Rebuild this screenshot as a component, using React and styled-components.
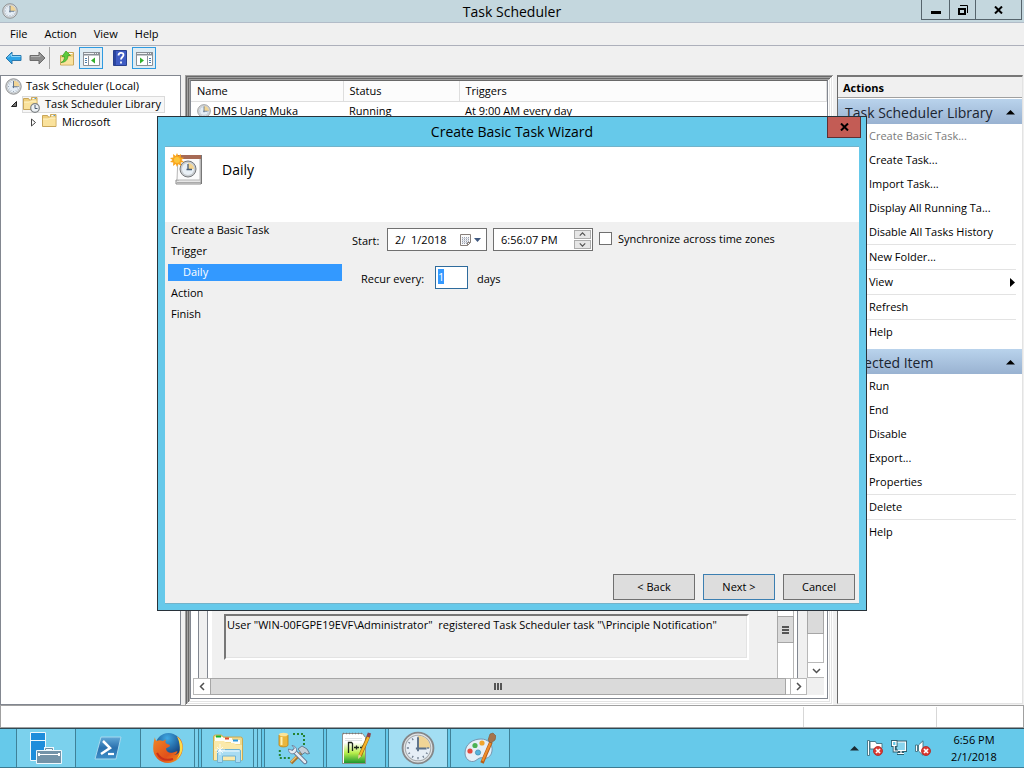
import { useEffect, useRef, useState } from "react";
import styled, { createGlobalStyle } from "styled-components";

const GlobalStyle = createGlobalStyle`
  * {
    box-sizing: border-box;
  }

  body {
    margin: 0;
    font-family: "Open Sans", "Noto Sans", sans-serif;
    font-size: 11px;
    line-height: 16px;
    color: #000;
    background: #f0f0f0;
  }

  button,
  input {
    font: inherit;
    color: inherit;
  }

  svg {
    display: block;
    flex: none;
  }
`;

// Window frame
const Desktop = styled.div`
  position: relative;
  min-height: 100vh;
  display: flex;
  flex-direction: column;
  background: #f0f0f0;
`;

const TitleBar = styled.header`
  display: grid;
  grid-template-columns: 1fr auto 1fr;
  height: 23px;
  background: #c4d7de;
  border-bottom: 1px solid #b2bcc8;
`;

const TitleIcon = styled.div`
  padding: 3px 2px;
`;

const Title = styled.h1`
  margin: 0;
  font-size: 14px;
  font-weight: 400;
  line-height: 24px;
`;

const WindowControls = styled.div`
  display: flex;
  justify-content: flex-end;
  align-items: flex-start;
  padding-right: 2px;
`;

const ControlButton = styled.button`
  display: flex;
  align-items: center;
  justify-content: center;
  width: ${(props) => props.$width}px;
  height: 20px;
  padding: 0;
  background: none;
  border: 1px solid #56646c;
  border-top: none;
  border-left-width: ${(props) => (props.$first ? "1px" : "0")};
`;

const MenuBar = styled.nav`
  display: flex;
  gap: 17px;
  height: 23px;
  padding: 0 10px;
  border-bottom: 1px solid #adb0bb;
`;

const MenuButton = styled.button`
  padding: 0;
  border: none;
  background: none;
  font-size: 11px;
  line-height: 22px;
`;

const Toolbar = styled.div`
  display: flex;
  align-items: flex-start;
  padding: 1px 1px 6px;
`;

const ToolButton = styled.button`
  display: flex;
  align-items: center;
  justify-content: center;
  width: 24px;
  height: 22px;
  padding: 0;
  background: ${(props) => (props.$pressed ? "#dfecf3" : "none")};
  border: 1px solid ${(props) => (props.$pressed ? "#2f9ae0" : "transparent")};
`;

const ToolDivider = styled.span`
  width: 1px;
  height: 22px;
  margin-right: 5px;
  background: #a6a6a6;
`;

const ToolGap = styled.span`
  width: 5px;
`;

const Workspace = styled.main`
  flex: 1;
  display: flex;
  gap: 4px;
  padding-right: 1px;
`;

// Tree
const TreePane = styled.aside`
  width: 181px;
  background: #fff;
  border: 1px solid #828790;
  padding-top: 1px;
`;

const TreeRow = styled.div`
  display: flex;
  align-items: center;
  gap: 4px;
  height: 18px;
  padding-left: ${(props) => props.$indent}px;
  white-space: nowrap;
`;

const TreeLabel = styled.span`
  display: flex;
  align-items: center;
  gap: 5px;
  height: 17px;
  padding: 0 3px 0 0;
  background: ${(props) => (props.$selected ? "#f7f7f7" : "none")};
  border: 1px solid ${(props) => (props.$selected ? "#dadada" : "transparent")};
`;

// Middle pane
const CenterFrame = styled.section`
  flex: 1;
  min-width: 0;
  display: flex;
  padding: 5px 5px 6px 5px;
  background: #fff;
  box-shadow:
    inset 1px 1px #a0a0a0,
    inset -1px -1px #fff,
    inset 2px 2px #696969,
    inset -2px -2px #e3e3e3,
    inset 3px 3px #a0a0a0,
    inset -3px -3px #fff,
    inset 4px 4px #696969,
    inset -4px -4px #e3e3e3,
    inset 5px 5px #a0a0a0;
`;

const CenterView = styled.div`
  flex: 1;
  min-width: 0;
  display: flex;
  flex-direction: column;
  background: #fff;
  border: 1px solid #828790;
  border-top-color: #696969;
`;

const TaskTable = styled.table`
  width: 100%;
  border-collapse: collapse;
  table-layout: fixed;

  th {
    height: 20px;
    padding: 1px 6px 0;
    font-weight: 400;
    text-align: left;
    background: #fcfcfc;
    border-right: 1px solid #dedede;
    border-bottom: 1px solid #dedede;
  }

  td {
    height: 18px;
    padding: 1px 6px 0;
  }
`;

const TaskName = styled.span`
  display: flex;
  align-items: center;
  gap: 2px;
`;

const Details = styled.div`
  flex: 1;
  display: grid;
  grid-template-columns: 1fr 17px;
  grid-template-rows: 1fr 17px;
  padding: 0 3px 3px 2px;
`;

const EventPane = styled.div`
  display: flex;
  padding-left: 5px;
`;

const EventEdge = styled.div`
  width: 10px;
  background: #f0f0f0;
  border-left: 1px solid #828790;
  border-right: ${(props) => (props.$open ? "none" : "1px solid #828790")};
`;

const EventBody = styled.div`
  flex: 1;
  display: flex;
  align-items: flex-end;
  margin-left: 4px;
  padding: 0 28px 18px 12px;
  background: #f0f0f0;
`;

const EventText = styled.p`
  flex: 1;
  height: 46px;
  margin: 0;
  padding: 1px 1px;
  white-space: pre;
  border: 2px solid;
  border-color: #777 #fff #fff #777;
  box-shadow: inset -1px -1px #e3e3e3;
`;

const VerticalScroll = styled.div`
  display: flex;
  flex-direction: column;
  justify-content: flex-end;
  width: 17px;
  margin-right: ${(props) => (props.$inset ? "3px" : "0")};
  background: #fff;
  border: 1px solid #b8b8b8;
  border-bottom: ${(props) => (props.$inset ? "none" : "1px solid #b8b8b8")};
`;

const VerticalThumb = styled.div`
  display: flex;
  align-items: center;
  justify-content: center;
  height: ${(props) => props.$size}px;
  margin: 0 -1px ${(props) => props.$below}px;
  background: #dadada;
  border: 1px solid #a6a6a6;
`;

const HorizontalScroll = styled.div`
  display: flex;
  background: #fff;
  border: 1px solid #b8b8b8;
`;

const HorizontalThumb = styled.div`
  flex: 1;
  display: flex;
  align-items: center;
  justify-content: center;
  margin: -1px 4px -1px 0;
  background: #dadada;
  border: 1px solid #a6a6a6;
`;

const ScrollButton = styled.button`
  display: flex;
  align-items: center;
  justify-content: center;
  width: 16px;
  height: 15px;
  padding: 0;
  background: #fff;
  border: none;
  border-left: ${(props) => (props.$line === "left" ? "1px solid #b8b8b8" : "none")};
  border-top: ${(props) => (props.$line === "top" ? "1px solid #b8b8b8" : "none")};
`;

const ScrollCorner = styled.div`
  background: #f0f0f0;
`;

// Actions pane
const ActionsPane = styled.aside`
  width: 186px;
  background: #fff;
  border: 1px solid #e3e3e3;
  border-top: 2px solid #777;
  border-left: 1px solid #696969;
  margin-bottom: 1px;
`;

const ActionsTitle = styled.h2`
  height: 21px;
  margin: 0 0 1px;
  padding: 0 5px;
  font-size: 11px;
  line-height: 21px;
  background: #f0f0f0;
  border-bottom: 1px solid #a0a0a0;
`;

const ActionGroup = styled.section`
  margin-bottom: 5px;
`;

const GroupHeader = styled.button`
  display: flex;
  align-items: center;
  justify-content: space-between;
  width: 100%;
  height: 25px;
  padding: 2px 7px 0;
  font-size: 14px;
  white-space: nowrap;
  color: #1a2430;
  background: linear-gradient(#b9d3ec, #99b2d1);
  border: none;
`;

const ActionItem = styled.button`
  display: flex;
  align-items: center;
  justify-content: space-between;
  width: 178px;
  height: ${(props) => (props.$divided ? "25px" : "24px")};
  padding: 0 0 0 31px;
  color: ${(props) => (props.$dimmed ? "#7a7a7a" : "#000")};
  background: none;
  border: none;
  border-bottom: ${(props) => (props.$divided ? "1px solid #e3e3e3" : "none")};
`;

const StatusBar = styled.footer`
  display: flex;
  justify-content: flex-end;
  height: 23px;
  padding: 1px 1px 0;
  background: #fff;
  border: 1px solid #a0a0a0;
`;

const StatusCell = styled.span`
  width: ${(props) => props.$width}px;
  border-left: 1px solid #d7d7d7;
`;

// Taskbar
const Taskbar = styled.div`
  display: flex;
  height: 40px;
  padding-left: 16px;
  background: #66c9ea;
  border-top: 1px solid #2f4a55;
  border-bottom: 1px solid #3c7b92;
`;

const TaskButton = styled.button`
  display: flex;
  align-items: center;
  justify-content: center;
  width: ${(props) => props.$width}px;
  padding: 0;
  background: ${(props) =>
    props.$active ? "#a3def3" : props.$running ? "#7bd1ed" : "none"};
  border: solid #3f8198;
  border-width: ${(props) => (props.$running ? "0 1px" : "0")};
  margin-right: ${(props) => props.$gap || 0}px;
`;

const StackEdge = styled.span`
  width: 4px;
  margin-right: ${(props) => (props.$last ? "2px" : "0")};
  background: #7bd1ed;
  border-right: 1px solid #3f8198;
`;

const Tray = styled.div`
  display: flex;
  align-items: center;
  gap: 8px;
  margin-left: auto;
  padding-right: 26px;
`;

const TrayClock = styled.time`
  width: 48px;
  margin-left: 11px;
  text-align: center;
  line-height: 17px;
  white-space: nowrap;
`;

// Wizard dialog
const DialogLayer = styled.div`
  position: absolute;
  inset: 0;
  display: flex;
  align-items: flex-start;
  justify-content: center;
  padding-top: 116px;
`;

const Dialog = styled.div`
  display: flex;
  flex-direction: column;
  width: 710px;
  min-height: 495px;
  padding: 0 7px 6px;
  background: #66c9ea;
  border: 1px solid #28323a;
`;

const DialogTitleBar = styled.div`
  display: grid;
  grid-template-columns: 1fr auto 1fr;
  height: 29px;
`;

const DialogTitle = styled.h2`
  grid-column: 2;
  margin: 0;
  font-size: 14px;
  font-weight: 400;
  line-height: 30px;
`;

const DialogClose = styled.button`
  display: flex;
  align-items: center;
  justify-content: center;
  justify-self: end;
  width: 34px;
  height: 21px;
  margin-right: -2px;
  padding: 0;
  background: #c35c55;
  border: 1px solid #5f2f33;
  border-top: none;
`;

const DialogContent = styled.form`
  flex: 1;
  display: flex;
  flex-direction: column;
  background: #f0f0f0;
  border-top: 1px solid #72b3ca;
  border-bottom: 1px solid #72b3ca;
`;

const DialogHeader = styled.div`
  display: flex;
  align-items: flex-start;
  gap: 18px;
  height: 75px;
  padding: 5px 5px;
  background: #fff;
`;

const DialogHeading = styled.h3`
  margin: 0;
  font-size: 14px;
  font-weight: 400;
  line-height: 36px;
`;

const DialogBody = styled.div`
  flex: 1;
  display: flex;
  gap: 10px;
  padding-left: 3px;
`;

const Steps = styled.ol`
  display: flex;
  flex-direction: column;
  gap: 4px;
  width: 174px;
  margin: 0;
  padding: 0;
  list-style: none;
`;

const Step = styled.li`
  height: 17px;
  padding-left: ${(props) => (props.$current ? "15px" : "3px")};
  color: ${(props) => (props.$current ? "#fff" : "#000")};
  background: ${(props) => (props.$current ? "#3399ff" : "none")};
`;

const Fields = styled.div`
  display: flex;
  flex-direction: column;
  gap: 15px;
  padding-top: 6px;
`;

const FieldRow = styled.div`
  display: flex;
  align-items: center;
  padding-left: ${(props) => props.$indent || 0}px;
`;

const FieldLabel = styled.label`
  width: ${(props) => props.$width}px;
  padding-top: 2px;
`;

const FieldBox = styled.div`
  display: flex;
  align-items: center;
  width: 100px;
  height: 23px;
  margin-right: 6px;
  padding: 0 4px 0 7px;
  background: #fff;
  border: 1px solid #707070;
`;

const FieldInput = styled.input`
  flex: 1;
  min-width: 0;
  padding: 0;
  border: none;
  outline: none;
  background: none;
  white-space: pre;
`;

const PickerButton = styled.button`
  display: flex;
  align-items: center;
  gap: 2px;
  padding: 0;
  background: none;
  border: none;
`;

const Spinner = styled.div`
  display: flex;
  flex-direction: column;
  gap: 1px;
  margin-right: -3px;
`;

const SpinButton = styled.button`
  display: flex;
  align-items: center;
  justify-content: center;
  width: 17px;
  height: 9px;
  padding: 0;
  background: #e6e6e6;
  border: 1px solid #acacac;
`;

const SyncLabel = styled.label`
  display: flex;
  align-items: center;
  padding-bottom: 2px;
`;

const Checkbox = styled.input`
  appearance: none;
  width: 13px;
  height: 13px;
  margin: 0 6px 0 0;
  background: #fff;
  border: 1px solid #707070;
`;

const DaysInput = styled.input`
  width: 33px;
  height: 23px;
  margin-right: 9px;
  padding: 0 2px 2px;
  background: #fff;
  border: 1px solid #2e6b9c;
  outline: none;
  caret-color: transparent;

  &::selection {
    color: #fff;
    background: #3399ff;
  }
`;

const DialogFooter = styled.div`
  display: flex;
  justify-content: flex-end;
  gap: 8px;
  padding: 0 4px 3px;
`;

const DialogButton = styled.button`
  width: ${(props) => props.$width || 72}px;
  height: 26px;
  padding: 0;
  background: #dddddd;
  border: 1px solid ${(props) => (props.$primary ? "#3c7fb1" : "#707070")};
`;

// Icons
const ClockIcon = ({ size = 16 }) => (
  <svg width={size} height={size} viewBox="0 0 32 32">
    <circle cx="16" cy="16" r="14.5" fill="#e3e5e6" stroke="#858789" strokeWidth="1.800" />
    <circle cx="16" cy="16" r="12" fill="#e6eef6" stroke="#a7abae" strokeWidth="1" />
    <path d="M16 16V4.500A11.500 11.500 0 0 1 27.500 16z" fill="#f1d596" />
    <path
      d="M16 5.500v2M16 24.500v2M5.500 16h2M24.500 16h2M10.500 7l1 1.500M7 10.500l1.500 1M7 21.500l1.500-1M10.500 25l1-1.500M21.500 25l-1-1.500M25 21.500l-1.500-1"
      stroke="#6f7e90"
      strokeWidth="1.200"
    />
    <path d="M16 6v13M14 16.500h10" fill="none" stroke="#5b7089" strokeWidth="1.800" />
  </svg>
);

const FolderIcon = ({ clock }) => (
  <svg width={clock ? 17 : 15} height="17" viewBox={clock ? "0 0 17 17" : "0 1 15 17"}>
    <path d="M.5 13.500v-11h5l1 1.500h2V1.500h5.500v12z" fill="#f0cf7c" stroke="#c9a659" />
    <path d="M9.500 2.500h3.500" stroke="#fff" strokeWidth="1.200" />
    <path d="M11.500 2.500h1.500" stroke="#4b9bd0" />
    <path d="M1 6h5.500l1-1H13.500v8H1z" fill="#fae29c" />
    <path d="M1 6h5.500l1-1h6" fill="none" stroke="#fff5cc" />
    {clock && (
      <g>
        <circle cx="12" cy="12" r="4.300" fill="#edf1f4" stroke="#7c8184" strokeWidth="1.200" />
        <path d="M12 9v3.500h2.500" fill="none" stroke="#4b5c70" />
      </g>
    )}
  </svg>
);

const ArrowIcon = ({ forward }) => (
  <svg width="17" height="14" viewBox="0 0 17 14">
    <path
      d={forward ? "M16 7l-6-6v3.500H1v5h9V13z" : "M1 7l6-6v3.500h9v5H7V13z"}
      fill={forward ? "#8c8c8c" : "#2ea4e6"}
      stroke={forward ? "#6c6c6c" : "#2b78ad"}
    />
    <path
      d={forward ? "M2 5.500h9V3.500" : "M3 6.500l3.500-3.500v2.500h9"}
      fill="none"
      stroke={forward ? "#b5b5b5" : "#8ed6fa"}
    />
  </svg>
);

const FolderUpIcon = () => (
  <svg width="16" height="16" viewBox="0 0 16 16">
    <path d="M1.500 15V5.500H8l1-3h5.500V15z" fill="#f0cf7c" stroke="#c9a659" />
    <path d="M10 3.500h3.500" stroke="#fff" />
    <path d="M2 8h6l1-1h5v7.500H2z" fill="#fae29c" />
    <path
      d="M2 12.500c2.500-1 3.500-3 3.500-6H3L7 1l4.500 4.500H9c0 4-2.500 7-7 7z"
      fill="#5ccb3c"
      stroke="#379a22"
      strokeWidth=".7"
    />
  </svg>
);

const PaneIcon = ({ right }) => (
  <svg width="17" height="15" viewBox="0 0 17 15">
    <path d="M.5 1.500h16v13H.5z" fill="#fff" stroke="#8c9095" />
    <path d="M0 1h17v4H0z" fill="#8a9096" />
    <path d="M1 2.500h10M12 2.500h1M14 2.500h1" stroke="#eef1f3" />
    <path d="M1 4.500h15" stroke="#c4c8cc" />
    <path d={right ? "M11.500 5v9" : "M5.500 5v9"} stroke="#8c9095" />
    <path
      d={right ? "M13 7.500h2M13 9.500h2M13 11.500h2" : "M2 7.500h2M2 9.500h2M2 11.500h2"}
      stroke="#4d7fae"
    />
    <path d={right ? "M4 6.500v6l4-3z" : "M12 6.500v6l-4-3z"} fill="#33b02c" />
  </svg>
);

const HelpIcon = () => (
  <svg width="14" height="16" viewBox="0 0 14 16">
    <path d="M.5.500h13v15H.5z" fill="#3f5cc4" stroke="#28408f" />
    <path d="M1 1h2v14H1z" fill="#2a459f" />
    <path
      d="M5.500 5.500c0-3.500 5-3.500 5-.5 0 2-2.500 2-2.500 4.500M8 11.500v2"
      fill="none"
      stroke="#fff"
      strokeWidth="1.800"
    />
  </svg>
);

const CloseIcon = () => (
  <svg width="9" height="8" viewBox="0 0 9 8">
    <path d="M1 .5L8 7.500M8 .5L1 7.500" stroke="#000" strokeWidth="2" />
  </svg>
);

const Chevron = ({ direction, size = 9 }) => {
  const paths = {
    left: "M6 1L2.500 4.500 6 8",
    right: "M3 1l3.500 3.500L3 8",
    down: "M1 3l3.500 3.500L8 3",
    up: "M1 6l3.500-3.500L8 6",
  };

  return (
    <svg width={size} height={size} viewBox="0 0 9 9">
      <path d={paths[direction]} fill="none" stroke="#505050" strokeWidth="1.500" />
    </svg>
  );
};

const Triangle = ({ direction = "up", color = "#000" }) => {
  const paths = { up: "M0 6.500L4.500 2 9 6.500z", right: "M3 0l5 4.500L3 9z", down: "M1 3h7L4.500 7z" };

  return (
    <svg width="9" height="9" viewBox="0 0 9 9">
      <path d={paths[direction]} fill={color} />
    </svg>
  );
};

const CalendarIcon = () => (
  <svg width="11" height="12" viewBox="0 0 11 12">
    <path d="M.5.500h10v8l-3 3h-7z" fill="#fafafa" stroke="#877f7a" />
    <path d="M2 3.500h7M2 5.500h7M2 7.500h7M2 9.500h5" stroke="#9aa1b2" strokeDasharray="1 1" />
    <path d="M2 4.500h7M2 6.500h7M2 8.500h5" stroke="#d5d8de" />
    <path d="M7.500 11.500v-3h3" fill="none" stroke="#877f7a" />
  </svg>
);

const NewTaskIcon = () => (
  <svg width="34" height="34" viewBox="0 0 34 34">
    <path d="M9 4h22v28H6v-4h3z" fill="#e7e7e7" stroke="#8d8d8d" />
    <path d="M8 4h22v24H7z" fill="#fbfbfb" stroke="#b5b5b5" />
    <path d="M8 3h23v4H8z" fill="#a66a55" />
    <path d="M31.500 3v29" stroke="#777" />
    <path d="M7 30.500h24" stroke="#aaa" />
    <circle cx="18" cy="17" r="8" fill="#c9cdd0" stroke="#77797c" />
    <circle cx="18" cy="17" r="6" fill="#e9f0f6" />
    <path d="M18 17v-6a6 6 0 0 1 6 6z" fill="#f5d48e" />
    <path d="M18 12v6M16.500 17.500H22" fill="none" stroke="#465b75" strokeWidth="1.300" />
    <path
      d="M7 1l1.300 3L11 2l-.3 3.500 3.300.3-2.500 2.200 2.500 2-3.300.5.500 3.500-2.900-2L7 15l-1.300-3L3 14l.3-3.500L0 10l2.500-2L0 6l3.300-.5L3 2l2.700 2z"
      fill="#f9a51d"
    />
    <circle cx="7" cy="8" r="3" fill="#fdc63c" />
  </svg>
);

const ServerManagerIcon = () => (
  <svg width="34" height="34" viewBox="0 0 34 34">
    <path d="M1.500 1.500h15v28h-15z" fill="#1e8ddb" stroke="#eef8fd" />
    <path d="M1 9.500h16" stroke="#eef8fd" />
    <path d="M16.500 20v-2.500h7V20" fill="none" stroke="#eef8fd" strokeWidth="3" />
    <path d="M16.500 20v-2.500h7V20" fill="none" stroke="#6f8fa3" />
    <path d="M7.500 19.500h25v13h-25z" fill="#7393a8" stroke="#eef8fd" />
    <path d="M10 23.500h20" stroke="#fff" />
    <path d="M10 22v3M30 22v3" stroke="#fff" strokeWidth="2" />
  </svg>
);

const PowerShellIcon = () => (
  <svg width="28" height="24" viewBox="0 0 28 24">
    <defs>
      <linearGradient id="shell" x1="0" y1="0" x2="0" y2="1">
        <stop offset="0" stopColor="#62a9d8" />
        <stop offset=".5" stopColor="#2a70ae" />
        <stop offset="1" stopColor="#3d8fc8" />
      </linearGradient>
    </defs>
    <path d="M7 1h20l-5 22H1z" fill="url(#shell)" stroke="#a6d8ee" strokeLinejoin="round" />
    <path d="M9 5l7 7-9 6" fill="none" stroke="#fff" strokeWidth="2.500" />
    <path d="M14 18h6" stroke="#fff" strokeWidth="2.200" />
  </svg>
);

const FirefoxIcon = () => (
  <svg width="32" height="32" viewBox="0 0 32 32">
    <defs>
      <radialGradient id="globe" cx=".45" cy=".2" r=".8">
        <stop offset="0" stopColor="#3fa9e3" />
        <stop offset="1" stopColor="#0b2f6d" />
      </radialGradient>
      <linearGradient id="fox" x1="0" y1="0" x2="1" y2="1">
        <stop offset="0" stopColor="#f08a24" />
        <stop offset=".6" stopColor="#e1501b" />
        <stop offset="1" stopColor="#f5a21e" />
      </linearGradient>
    </defs>
    <circle cx="16.500" cy="14" r="13" fill="url(#globe)" />
    <path
      d="M3 5c0 2 .5 3 1.500 4 2-1 4-1 6 0 1 0 2-1 3.500-1.500-1 2-1 3.500 1 4.500 1 .5 3 .5 3 1.500 0 1.500-3 2-4 3 0 3 3 5 7 4 2-.5 4-2 4.500-1 0 1.500-2 3-4 3.500 4 0 7-3 7-8 0-4-1-7-3.500-10.500C29 6 31 11 30.800 16 30.500 24.500 24 31 16 31 7.500 31 1.200 24.500 1.200 16.500 1.200 12 2 8 3 5z"
      fill="url(#fox)"
    />
    <path d="M25 4.500c4 3 5.800 7 5.500 11.500-.3 5-3 9-6.500 12 3-4 4.200-8 3.800-13-.3-4-1-7-2.800-10.500z" fill="#ffdc45" />
    <path d="M5 21c3 6 9 8 16 6" fill="none" stroke="#c8321b" strokeWidth="2" />
  </svg>
);

const ExplorerIcon = () => (
  <svg width="34" height="32" viewBox="0 0 34 32">
    <path d="M2.500 28V5q0-2 2-2h6l2 2h17q2 0 2 2v21z" fill="#f1d98a" stroke="#c8aa54" />
    <path d="M4 5h8v4H4zM12 6h9v4h-9zM20 8h9v4h-9z" fill="#fdfdf8" />
    <path d="M5 3.500h5v2H5z" fill="#12b328" />
    <path d="M14 5.500h4v2h-4z" fill="#e0492c" />
    <path d="M22 7.500h5v2h-5z" fill="#2d98dd" />
    <path d="M3 9h10l2 2h8l2 2h6v15H3z" fill="#fbe9aa" />
    <path d="M6.500 30.500V19q0-1.500 1.500-1.500h20q1.500 0 1.500 1.500v11.500h-5V24h-13v6.500z" fill="#a9dcf2" stroke="#6eb2d3" />
    <path d="M7.500 19h21" stroke="#dff3fb" strokeWidth="1.500" />
    <path d="M9 12v11M4 18h10M6 15l6 6M12 15l-6 6" stroke="#fff" strokeWidth=".8" />
  </svg>
);

const ToolsIcon = () => (
  <svg width="32" height="34" viewBox="0 0 32 34">
    <path d="M1 4v10c0 2.500 9 2.500 9 0V4z" fill="#eab63c" stroke="#b98218" strokeWidth=".8" />
    <ellipse cx="5.500" cy="3.500" rx="4.500" ry="1.800" fill="#fbe498" />
    <path d="M3.500 6v8" stroke="#fff1b5" strokeWidth="2" />
    <path d="M15 3h11v11M1.800 19v8H13" fill="none" stroke="#258232" strokeWidth="2" strokeDasharray="2 2" />
    <path d="M25 20L13 32" stroke="#a8742d" strokeWidth="3.500" />
    <path d="M24 20L13 31" stroke="#eec06a" strokeWidth="1.500" />
    <path d="M20 18l4-3 5 3 2.500 4.500-2.500.5-2-1.500-3 2-2-3z" fill="#c4ced8" stroke="#56697d" strokeWidth=".8" />
    <path d="M16 20l11 11" stroke="#5f6f8b" strokeWidth="4.500" strokeLinecap="round" />
    <path d="M16 20l11 11" stroke="#e4ebf2" strokeWidth="2.500" strokeLinecap="round" />
    <path d="M14 14.500l2.500 2.500-2 2.500-4-1.500c0 4 3 6 6.500 4 3-2.500 1.500-7-3-7.500z" fill="#e4ebf2" stroke="#5f6f8b" strokeWidth=".8" />
  </svg>
);

const NotepadIcon = () => (
  <svg width="32" height="34" viewBox="0 0 32 34">
    <defs>
      <linearGradient id="paper" x1="0" y1="0" x2="0" y2="1">
        <stop offset=".3" stopColor="#fff" />
        <stop offset=".65" stopColor="#b8ee4b" />
        <stop offset="1" stopColor="#15922c" />
      </linearGradient>
    </defs>
    <path d="M2.500 2.500h20l3 4v26h-23z" fill="url(#paper)" stroke="#8c8f8c" />
    <path d="M3.500 32V3.500H22" fill="none" stroke="#fff" />
    <path d="M3 2.500h19" stroke="#777" strokeWidth="1.500" strokeDasharray="1 2" />
    <path d="M5 7.500h17M5 9.500h17" stroke="#c8cfd0" strokeWidth=".6" />
    <path d="M8.500 22V11.500h3l1 1V20M14 16.500h5M16.500 14.500v4M20 16.500h4M22.500 14.500v4" fill="none" stroke="#1b241b" strokeWidth="1.300" />
    <path d="M29 4L20 25" stroke="#9b6812" strokeWidth="3.500" />
    <path d="M28.500 6L20 24.500" stroke="#f6b52a" strokeWidth="2.200" />
    <path d="M28 6l1.500-4" stroke="#8d4350" strokeWidth="3.500" />
    <path d="M18.500 23.500l3 1.500-3.500 3z" fill="#e9cfa0" />
  </svg>
);

const PaintIcon = () => (
  <svg width="32" height="32" viewBox="0 0 32 32">
    <path
      d="M1 21C1 12 9 7 17 7c7 0 12 5 11 12-1 6-5 8-9 7-3-1-5 1-8 3-5 2-10-2-10-8z"
      fill="#e4eff7"
      stroke="#7795ae"
    />
    <circle cx="6" cy="19" r="2.600" fill="#e34b3e" />
    <circle cx="11" cy="13.500" r="2.600" fill="#4bb254" />
    <circle cx="18" cy="11" r="2.600" fill="#f0a52c" />
    <circle cx="14" cy="20.500" r="2.600" fill="#56b4dd" stroke="#3d89ad" strokeWidth=".7" />
    <path d="M27 10L18 31" stroke="#b65d15" strokeWidth="3.600" />
    <path d="M26.500 11L18.500 29" stroke="#f08d2c" strokeWidth="2" />
    <path d="M24 8l2-6 3-1 3 3-1 4-4 3z" fill="#a5744c" stroke="#845734" strokeWidth=".6" />
  </svg>
);

const ErrorBadge = ({ x, y }) => (
  <g transform={`translate(${x} ${y})`}>
    <circle r="4.500" fill="#dc3a32" stroke="#b3231f" strokeWidth=".8" />
    <path d="M-2-2L2 2M2-2L-2 2" stroke="#fff" strokeWidth="1.700" />
  </g>
);

const FlagIcon = () => (
  <svg width="16" height="16" viewBox="0 0 16 16">
    <path d="M.5.500h2v15h-2z" fill="#fff" stroke="#3f6f80" strokeWidth=".9" />
    <path d="M3 1.500h5.500l1 2H15V8l-4 2.500H8.500L7.500 9H3z" fill="#fff" stroke="#3f6f80" strokeWidth=".9" />
    <ErrorBadge x={11} y={11} />
  </svg>
);

const NetworkIcon = () => (
  <svg width="16" height="16" viewBox="0 0 16 16">
    <path d="M5.500 2h9v8.500h-9zM10 10v3.500M6 13.500h7" fill="none" stroke="#2f6070" strokeWidth="3" />
    <path d="M5 2h9.500v8.500H6" fill="#8ad5ee" stroke="#fff" strokeWidth="1.200" />
    <path d="M10 10.500v3M6.500 13.500h6.500" stroke="#fff" strokeWidth="1.200" />
    <path d="M1.500 1.500h3.500v4H1.500zM3.200 5.500v5.500H7" fill="none" stroke="#2f6070" strokeWidth="3" />
    <path d="M1.500 1.500h3.500v4H1.500z" fill="#66c9ea" stroke="#fff" strokeWidth="1.200" />
    <path d="M3.200 5.500v5.500H7" fill="none" stroke="#fff" strokeWidth="1.200" />
  </svg>
);

const SpeakerIcon = () => (
  <svg width="16" height="16" viewBox="0 0 16 16">
    <path d="M.5 5h2v6.500h-2z" fill="#fff" stroke="#3f6f80" strokeWidth=".9" />
    <path d="M3.500 5L8 .8v14.500L3.500 11z" fill="#fff" stroke="#3f6f80" strokeWidth=".9" />
    <ErrorBadge x={11} y={11} />
  </svg>
);

const libraryActions = [
  { label: "Create Basic Task...", dimmed: true },
  { label: "Create Task..." },
  { label: "Import Task..." },
  { label: "Display All Running Ta..." },
  { label: "Disable All Tasks History", divided: true },
  { label: "New Folder...", divided: true },
  { label: "View", divided: true, submenu: true },
  { label: "Refresh", divided: true },
  { label: "Help" },
];

const itemActions = [
  { label: "Run" },
  { label: "End" },
  { label: "Disable" },
  { label: "Export..." },
  { label: "Properties", divided: true },
  { label: "Delete", divided: true },
  { label: "Help" },
];

const steps = ["Create a Basic Task", "Trigger", "Daily", "Action", "Finish"];

const Actions = ({ title, items }) => (
  <ActionGroup>
    <GroupHeader>
      <span>{title}</span>
      <Triangle />
    </GroupHeader>
    {items.map((item) => (
      <ActionItem key={item.label} $divided={item.divided} $dimmed={item.dimmed}>
        <span>{item.label}</span>
        {item.submenu && <Triangle direction="right" />}
      </ActionItem>
    ))}
  </ActionGroup>
);

const Wizard = () => {
  const [date, setDate] = useState("2/  1/2018");
  const [time, setTime] = useState("6:56:07 PM");
  const [days, setDays] = useState("1");
  const daysRef = useRef(null);

  useEffect(() => {
    daysRef.current.focus();
    daysRef.current.select();
  }, []);

  return (
    <DialogLayer>
      <Dialog role="dialog" aria-labelledby="wizard-title">
        <DialogTitleBar>
          <DialogTitle id="wizard-title">Create Basic Task Wizard</DialogTitle>
          <DialogClose aria-label="Close wizard">
            <CloseIcon />
          </DialogClose>
        </DialogTitleBar>
        <DialogContent onSubmit={(e) => e.preventDefault()}>
          <DialogHeader>
            <NewTaskIcon />
            <DialogHeading>Daily</DialogHeading>
          </DialogHeader>
          <DialogBody>
            <Steps>
              {steps.map((step) => (
                <Step key={step} $current={step === "Daily"}>
                  {step}
                </Step>
              ))}
            </Steps>
            <Fields>
              <FieldRow>
                <FieldLabel htmlFor="start-date" $width={35}>
                  Start:
                </FieldLabel>
                <FieldBox>
                  <FieldInput
                    id="start-date"
                    value={date}
                    onChange={(e) => setDate(e.target.value)}
                  />
                  <PickerButton type="button" aria-label="Pick a date">
                    <CalendarIcon />
                    <Triangle direction="down" color="#3f587f" />
                  </PickerButton>
                </FieldBox>
                <FieldBox>
                  <FieldInput
                    aria-label="Start time"
                    value={time}
                    onChange={(e) => setTime(e.target.value)}
                  />
                  <Spinner>
                    <SpinButton type="button" aria-label="Later">
                      <Chevron direction="up" size={7} />
                    </SpinButton>
                    <SpinButton type="button" aria-label="Earlier">
                      <Chevron direction="down" size={7} />
                    </SpinButton>
                  </Spinner>
                </FieldBox>
                <SyncLabel>
                  <Checkbox type="checkbox" />
                  Synchronize across time zones
                </SyncLabel>
              </FieldRow>
              <FieldRow $indent={9}>
                <FieldLabel htmlFor="recur" $width={74}>
                  Recur every:
                </FieldLabel>
                <DaysInput
                  id="recur"
                  ref={daysRef}
                  value={days}
                  onChange={(e) => setDays(e.target.value)}
                />
                <FieldLabel htmlFor="recur">days</FieldLabel>
              </FieldRow>
            </Fields>
          </DialogBody>
          <DialogFooter>
            <DialogButton type="button" $width={82}>
              &lt; Back
            </DialogButton>
            <DialogButton type="submit" $primary>
              Next &gt;
            </DialogButton>
            <DialogButton type="button">Cancel</DialogButton>
          </DialogFooter>
        </DialogContent>
      </Dialog>
    </DialogLayer>
  );
};

const App = () => {
  return (
    <Desktop>
      <GlobalStyle />

      <TitleBar>
        <TitleIcon>
          <ClockIcon />
        </TitleIcon>
        <Title>Task Scheduler</Title>
        <WindowControls>
          <ControlButton $width={29} $first aria-label="Minimize">
            <svg width="10" height="8" viewBox="0 0 10 8">
              <path d="M0 5h10v3H0z" />
            </svg>
          </ControlButton>
          <ControlButton $width={26} aria-label="Restore">
            <svg width="10" height="10" viewBox="0 0 10 10">
              <path d="M1 4h6v5H1z" fill="none" stroke="#000" strokeWidth="2" />
              <path d="M2 .5h7.500V8" fill="none" stroke="#000" />
            </svg>
          </ControlButton>
          <ControlButton $width={46} aria-label="Close">
            <CloseIcon />
          </ControlButton>
        </WindowControls>
      </TitleBar>

      <MenuBar>
        {["File", "Action", "View", "Help"].map((item) => (
          <MenuButton key={item}>{item}</MenuButton>
        ))}
      </MenuBar>

      <Toolbar>
        <ToolButton aria-label="Back">
          <ArrowIcon />
        </ToolButton>
        <ToolButton aria-label="Forward">
          <ArrowIcon forward />
        </ToolButton>
        <ToolDivider />
        <ToolButton aria-label="Up one level">
          <FolderUpIcon />
        </ToolButton>
        <ToolButton $pressed aria-label="Console tree">
          <PaneIcon />
        </ToolButton>
        <ToolGap />
        <ToolButton aria-label="Help">
          <HelpIcon />
        </ToolButton>
        <ToolButton $pressed aria-label="Action pane">
          <PaneIcon right />
        </ToolButton>
      </Toolbar>

      <Workspace>
        <TreePane>
          <TreeRow $indent={4}>
            <ClockIcon size={17} />
            <span>Task Scheduler (Local)</span>
          </TreeRow>
          <TreeRow $indent={9}>
            <svg width="8" height="8" viewBox="0 0 8 8">
              <path d="M6.500 1.500v5h-5z" fill="#777" stroke="#222" />
            </svg>
            <TreeLabel $selected>
              <FolderIcon clock />
              Task Scheduler Library
            </TreeLabel>
          </TreeRow>
          <TreeRow $indent={28}>
            <svg width="8" height="9" viewBox="0 0 8 9">
              <path d="M2.500 1v7l4-3.500z" fill="#fff" stroke="#444" />
            </svg>
            <TreeLabel>
              <FolderIcon />
              Microsoft
            </TreeLabel>
          </TreeRow>
        </TreePane>

        <CenterFrame>
          <CenterView>
            <TaskTable>
              <colgroup>
                <col style={{ width: 152 }} />
                <col style={{ width: 116 }} />
                <col />
              </colgroup>
              <thead>
                <tr>
                  <th>Name</th>
                  <th>Status</th>
                  <th>Triggers</th>
                </tr>
              </thead>
              <tbody>
                <tr>
                  <td>
                    <TaskName>
                      <ClockIcon size={14} />
                      DMS Uang Muka
                    </TaskName>
                  </td>
                  <td>Running</td>
                  <td>At 9:00 AM every day</td>
                </tr>
              </tbody>
            </TaskTable>
            <Details>
              <EventPane>
                <EventEdge />
                <EventBody>
                  <EventText>
                    {'User "WIN-00FGPE19EVF\\Administrator"  registered Task Scheduler task "\\Principle Notification"'}
                  </EventText>
                </EventBody>
                <VerticalScroll $inset>
                  <VerticalThumb $size={27} $below={35}>
                    <svg width="7" height="8" viewBox="0 0 7 8">
                      <path d="M0 1h7M0 4h7M0 7h7" stroke="#555" strokeWidth="2" />
                    </svg>
                  </VerticalThumb>
                </VerticalScroll>
                <EventEdge $open />
              </EventPane>
              <VerticalScroll>
                <VerticalThumb $size={120} $below={28} />
                <ScrollButton $line="top" aria-label="Scroll down">
                  <Chevron direction="down" />
                </ScrollButton>
              </VerticalScroll>
              <HorizontalScroll>
                <ScrollButton aria-label="Scroll left">
                  <Chevron direction="left" />
                </ScrollButton>
                <HorizontalThumb>
                  <svg width="8" height="7" viewBox="0 0 8 7">
                    <path d="M1 0v7M4 0v7M7 0v7" stroke="#555" strokeWidth="2" />
                  </svg>
                </HorizontalThumb>
                <ScrollButton $line="left" aria-label="Scroll right">
                  <Chevron direction="right" />
                </ScrollButton>
              </HorizontalScroll>
              <ScrollCorner />
            </Details>
          </CenterView>
        </CenterFrame>

        <ActionsPane>
          <ActionsTitle>Actions</ActionsTitle>
          <Actions title="Task Scheduler Library" items={libraryActions} />
          <Actions title="Selected Item" items={itemActions} />
        </ActionsPane>
      </Workspace>

      <StatusBar>
        <StatusCell $width={133} />
        <StatusCell $width={86} />
      </StatusBar>

      <Taskbar>
        <TaskButton $width={60} $running aria-label="Server Manager">
          <ServerManagerIcon />
        </TaskButton>
        <TaskButton $width={64} aria-label="PowerShell">
          <PowerShellIcon />
        </TaskButton>
        <TaskButton $width={55} $running aria-label="Firefox">
          <FirefoxIcon />
        </TaskButton>
        <StackEdge $last />
        <TaskButton $width={53} $running aria-label="File Explorer">
          <ExplorerIcon />
        </TaskButton>
        <StackEdge />
        <StackEdge $last />
        <TaskButton $width={60} $gap={2} $running aria-label="Database tools">
          <ToolsIcon />
        </TaskButton>
        <TaskButton $width={60} $gap={2} $running aria-label="Notepad++">
          <NotepadIcon />
        </TaskButton>
        <TaskButton $width={60} $gap={2} $running $active aria-label="Task Scheduler">
          <ClockIcon size={34} />
        </TaskButton>
        <TaskButton $width={60} $running aria-label="Paint">
          <PaintIcon />
        </TaskButton>

        <Tray>
          <Triangle color="#1a2b33" />
          <FlagIcon />
          <NetworkIcon />
          <SpeakerIcon />
          <TrayClock>
            6:56 PM
            <br />
            2/1/2018
          </TrayClock>
        </Tray>
      </Taskbar>

      <Wizard />
    </Desktop>
  );
};

export default App;
